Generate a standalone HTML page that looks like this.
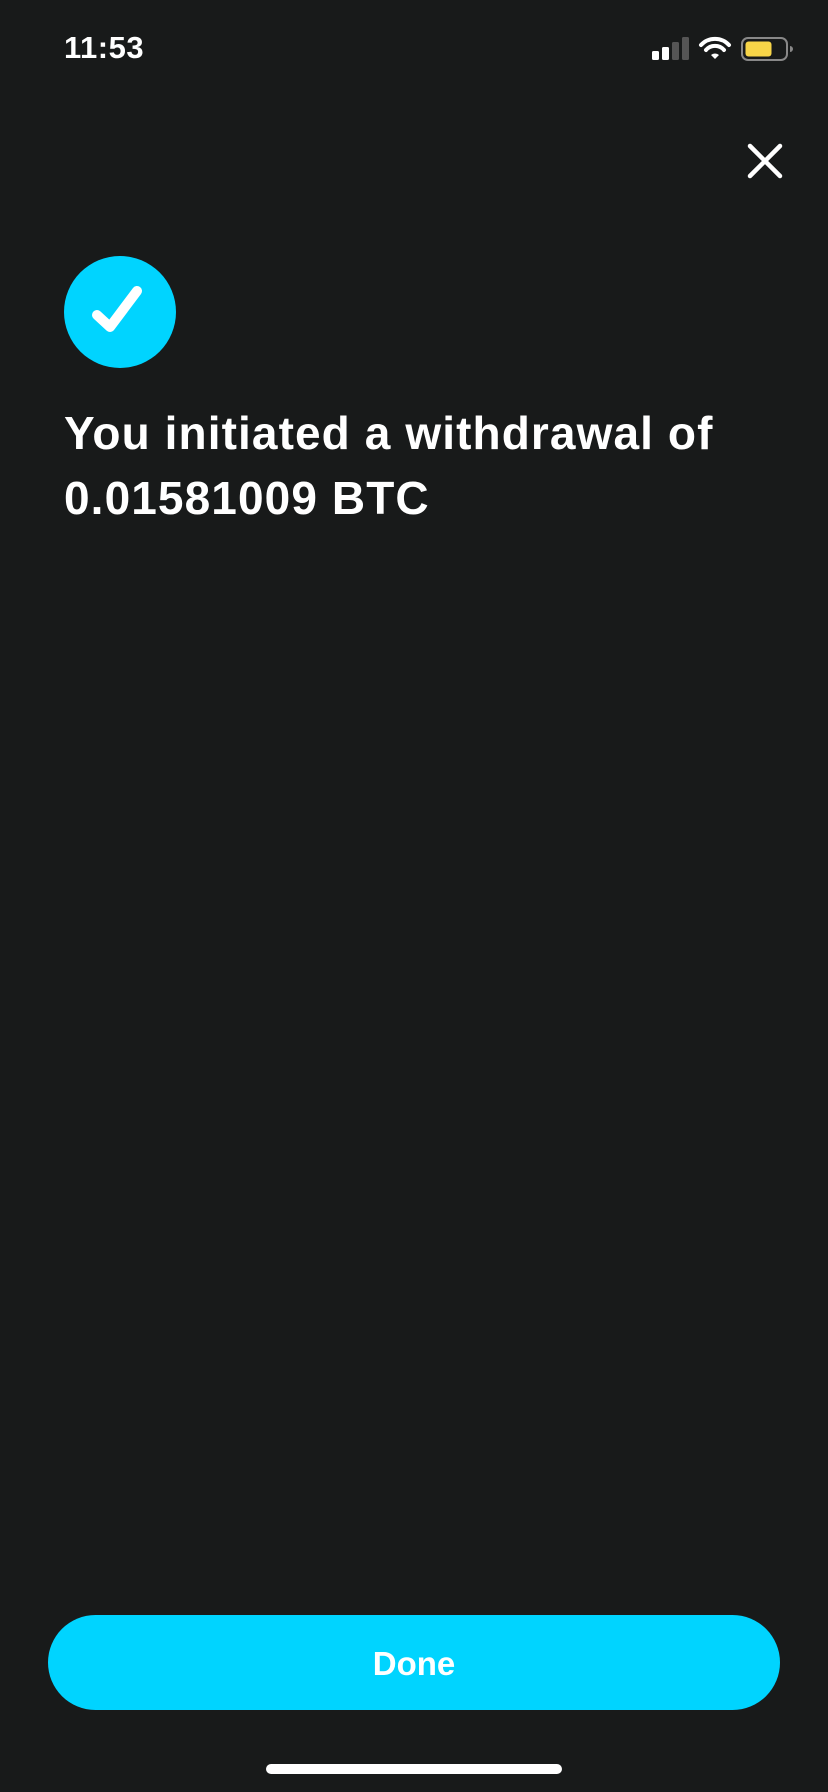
<!DOCTYPE html>
<html><head><style>
html,body{margin:0;padding:0;}
body{width:828px;height:1792px;background:#181a1a;position:relative;overflow:hidden;font-family:"Liberation Sans",sans-serif;color:#fff;}
.abs{position:absolute;}
</style></head><body>
<div class="abs" style="left:64px;top:30px;font-size:31px;font-weight:bold;letter-spacing:0.5px;">11:53</div>
<svg class="abs" style="left:650px;top:36px" width="145" height="28" viewBox="0 0 145 28">
 <rect x="2" y="15" width="7" height="9" rx="1.5" fill="#fff"/>
 <rect x="12" y="11" width="7" height="13" rx="1.5" fill="#fff"/>
 <rect x="22" y="6" width="7" height="18" rx="1.5" fill="#555"/>
 <rect x="32" y="1" width="7" height="23" rx="1.5" fill="#555"/>
 <path d="M51 9 A19 19 0 0 1 79 9" stroke="#fff" stroke-width="4" fill="none" stroke-linecap="round"/>
 <path d="M56 14 A12 12 0 0 1 74 14" stroke="#fff" stroke-width="4" fill="none" stroke-linecap="round"/>
 <path d="M61 19 L65 23 L69 19 A6 6 0 0 0 61 19Z" fill="#fff"/>
 <rect x="92" y="2" width="45" height="22" rx="6" fill="none" stroke="#888" stroke-width="2"/>
 <rect x="95.5" y="5.5" width="26" height="15" rx="3" fill="#f7d548"/>
 <path d="M140 10 v6 a3 3 0 0 0 0-6z" fill="#888"/>
</svg>
<svg class="abs" style="left:746px;top:142px" width="38" height="38" viewBox="0 0 38 38">
 <path d="M4 4 L34 34 M34 4 L4 34" stroke="#fff" stroke-width="4.5" stroke-linecap="round"/>
</svg>
<svg class="abs" style="left:64px;top:256px" width="112" height="112" viewBox="0 0 112 112">
 <circle cx="56" cy="56" r="56" fill="#00d4ff"/>
 <path d="M33 59 L46 71 L73 35" stroke="#fff" stroke-width="10" fill="none" stroke-linecap="round" stroke-linejoin="round"/>
</svg>
<div class="abs" style="left:64px;top:401px;font-size:46px;font-weight:bold;line-height:65px;letter-spacing:1.1px;">You initiated a withdrawal of<br>0.01581009 BTC</div>
<div class="abs" style="left:48px;top:1615px;width:732px;height:95px;border-radius:48px;background:#00d4ff;text-align:center;line-height:98px;font-size:33px;font-weight:bold;">Done</div>
<div class="abs" style="left:266px;top:1764px;width:296px;height:10px;border-radius:5px;background:#fff;"></div>
</body></html>
